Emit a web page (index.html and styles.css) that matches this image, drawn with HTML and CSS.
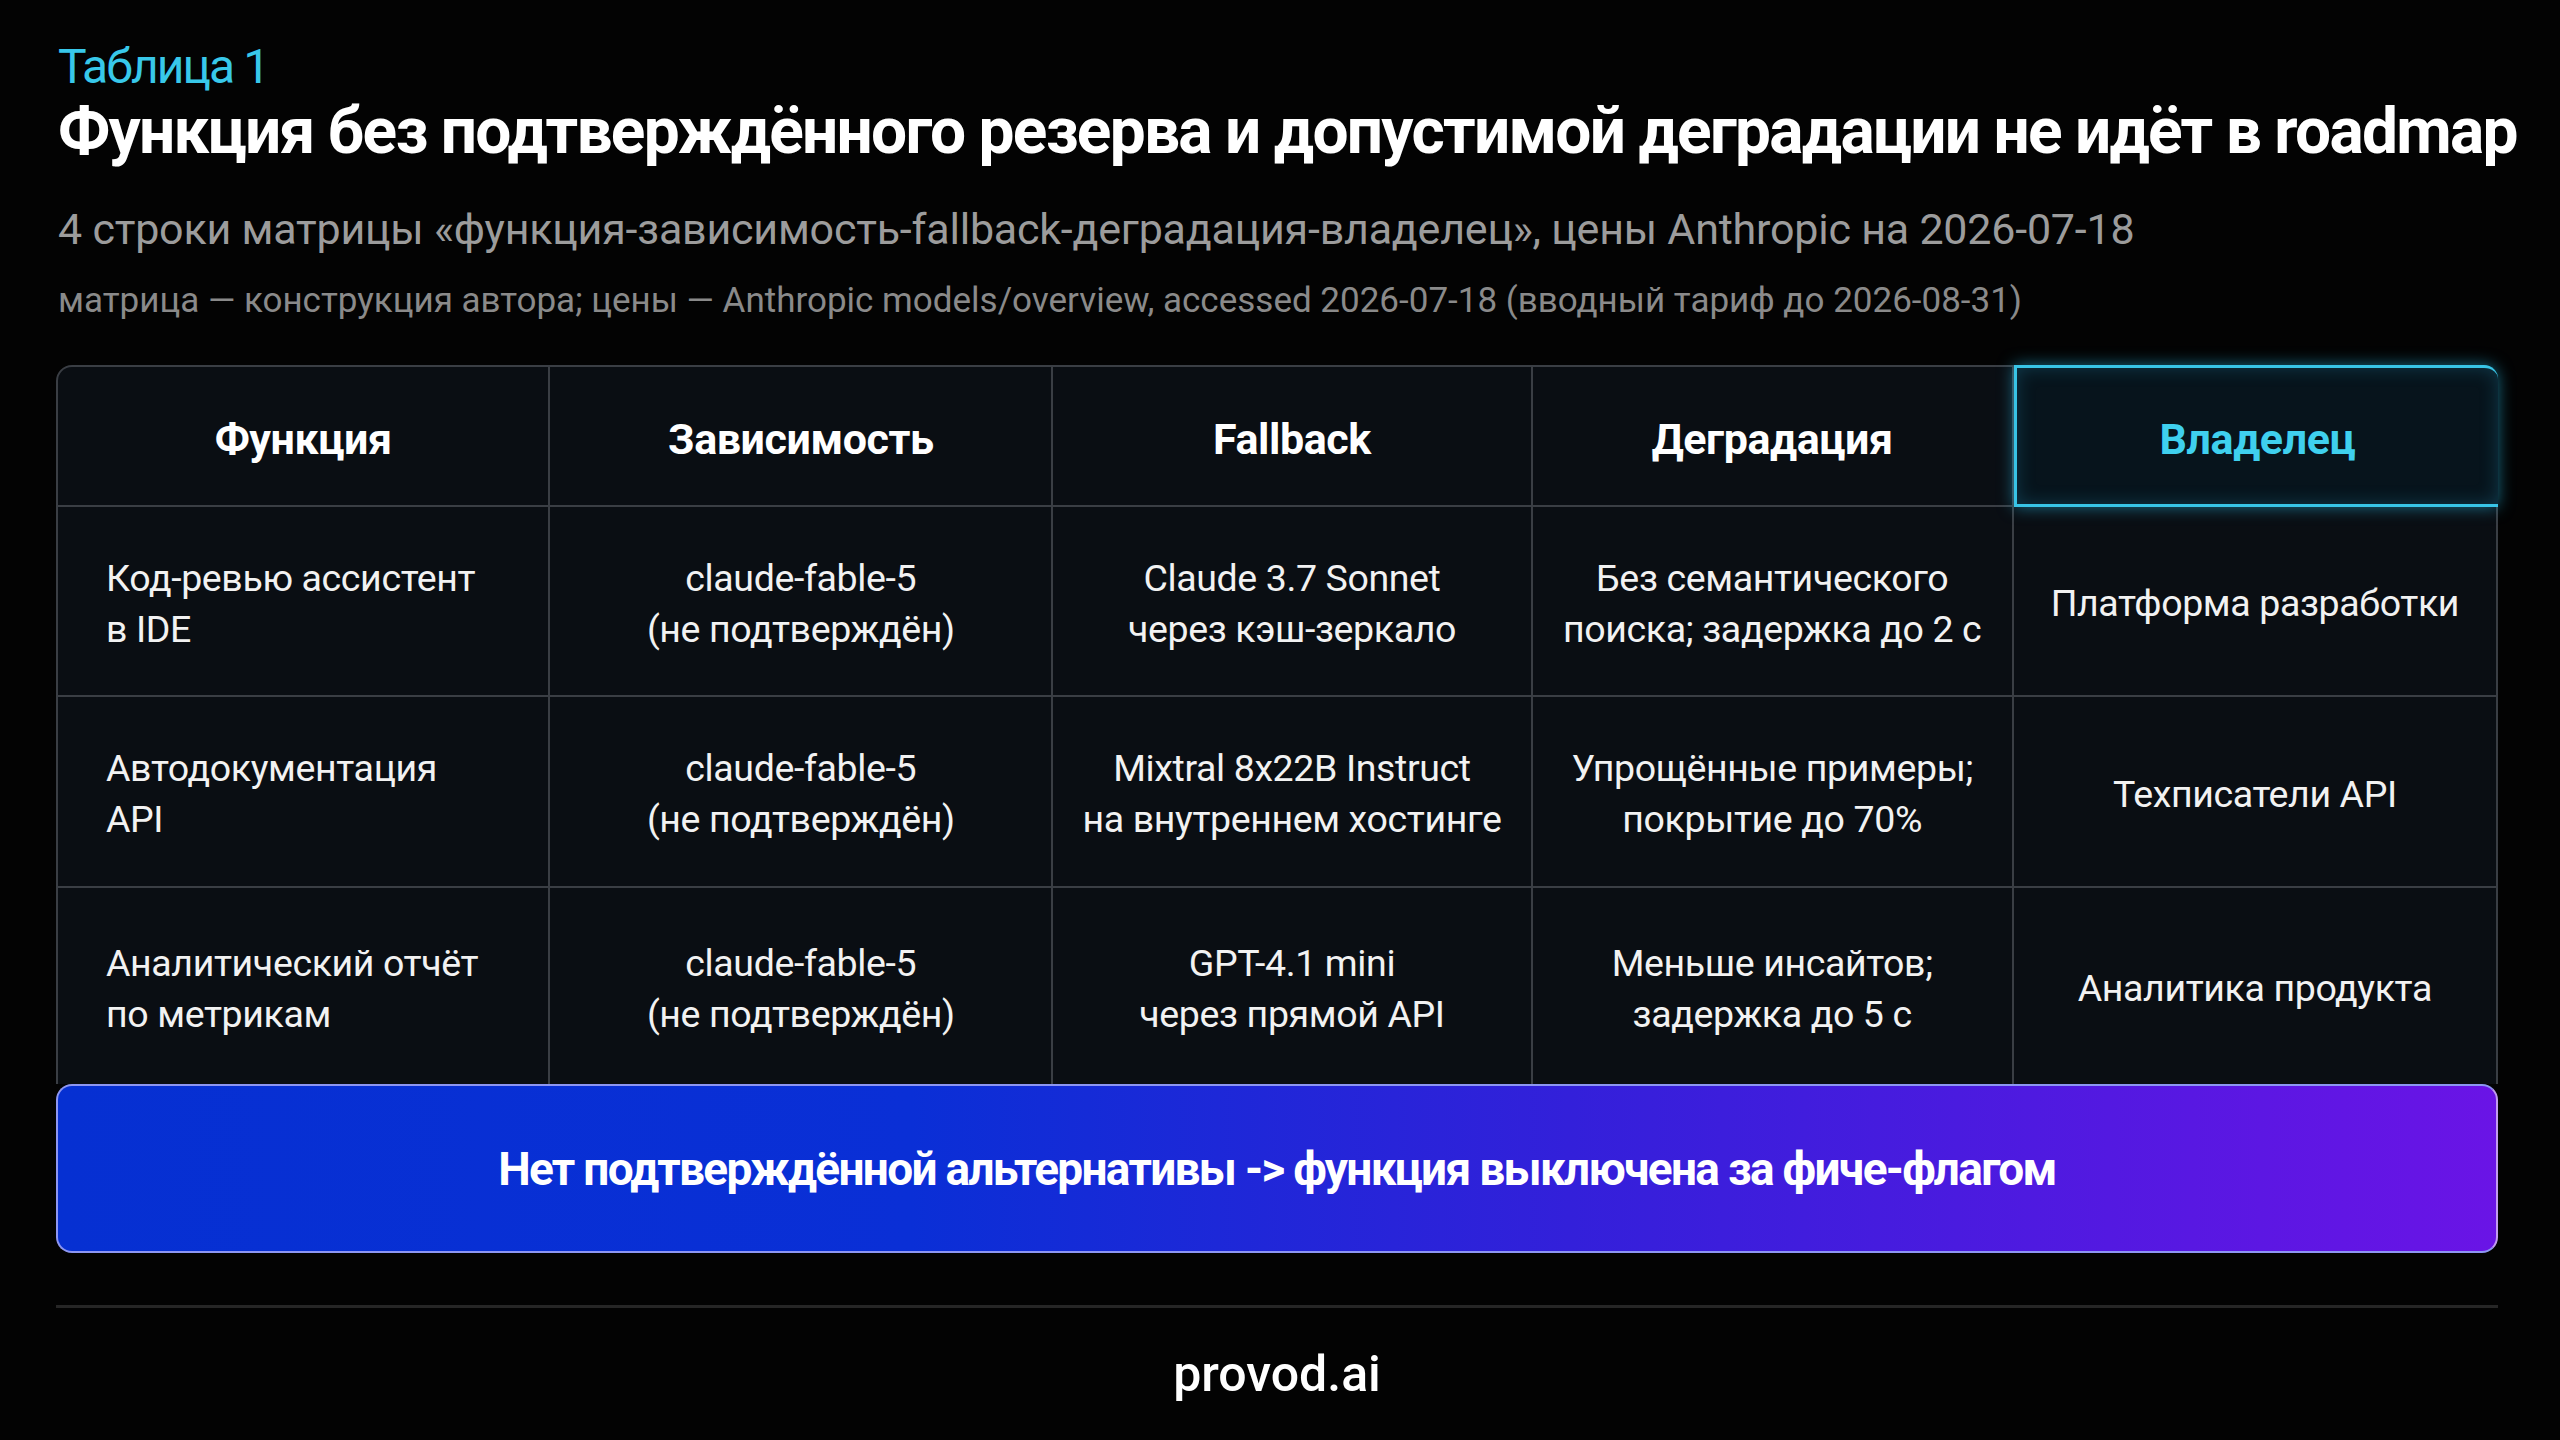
FILE: index.html
```html
<!DOCTYPE html>
<html lang="ru">
<head>
<meta charset="utf-8">
<title>Таблица 1</title>
<link rel="stylesheet" href="styles.css">
</head>
<body>
<main class="page">
  <div class="eyebrow">Таблица 1</div>
  <h1 class="title">Функция без подтверждённого резерва и допустимой деградации не идёт в roadmap</h1>
  <p class="subtitle">4 строки матрицы «функция-зависимость-fallback-деградация-владелец», цены Anthropic на 2026-07-18</p>
  <p class="source">матрица — конструкция автора; цены — Anthropic models/overview, accessed 2026-07-18 (вводный тариф до 2026-08-31)</p>

  <section class="matrix">
    <div class="grid">
      <div class="cell head">Функция</div>
      <div class="cell head">Зависимость</div>
      <div class="cell head">Fallback</div>
      <div class="cell head">Деградация</div>
      <div class="cell head owner">Владелец</div>

      <div class="cell first r1">Код-ревью ассистент<br>в IDE</div>
      <div class="cell r1">claude-fable-5<br>(не подтверждён)</div>
      <div class="cell r1">Claude 3.7 Sonnet<br>через кэш-зеркало</div>
      <div class="cell r1">Без семантического<br>поиска; задержка до 2 с</div>
      <div class="cell last r1">Платформа разработки</div>

      <div class="cell first r2">Автодокументация<br>API</div>
      <div class="cell r2">claude-fable-5<br>(не подтверждён)</div>
      <div class="cell r2">Mixtral 8x22B Instruct<br>на внутреннем хостинге</div>
      <div class="cell r2">Упрощённые примеры;<br>покрытие до 70%</div>
      <div class="cell last r2">Техписатели API</div>

      <div class="cell first r3">Аналитический отчёт<br>по метрикам</div>
      <div class="cell r3">claude-fable-5<br>(не подтверждён)</div>
      <div class="cell r3">GPT-4.1 mini<br>через прямой API</div>
      <div class="cell r3">Меньше инсайтов;<br>задержка до 5 с</div>
      <div class="cell last r3">Аналитика продукта</div>
    </div>
    <div class="verdict">Нет подтверждённой альтернативы -&gt; функция выключена за фиче-флагом</div>
  </section>

  <hr class="divider">
  <footer class="brand">provod.ai</footer>
</main>
</body>
</html>
```

FILE: styles.css
```css
* { box-sizing: border-box; }

html, body {
  margin: 0;
  padding: 0;
  background: #030303;
}

body {
  font-family: Roboto, "Noto Sans", "DejaVu Sans", sans-serif;
  color: #ffffff;
  width: 2560px;
  height: 1440px;
  overflow: hidden;
}

.page {
  padding: 39px 62px 0 56px;
}

.eyebrow {
  font-size: 48px;
  line-height: 56px;
  color: #38c8ea;
  padding-left: 2px;
  letter-spacing: -0.04em;
}

.title {
  margin: 2px 0 0;
  font-size: 64px;
  line-height: 70px;
  font-weight: 700;
  letter-spacing: -0.027em;
  padding-left: 2px;
  white-space: nowrap;
}

.subtitle {
  margin: 34px 0 0;
  font-size: 43px;
  line-height: 56px;
  color: #9c9c9c;
  padding-left: 2px;
  letter-spacing: -0.005em;
  white-space: nowrap;
}

.source {
  margin: 21px 0 0;
  font-size: 35px;
  line-height: 46px;
  color: #8a8a8a;
  padding-left: 2px;
  letter-spacing: 0;
  white-space: nowrap;
}

.matrix {
  margin-top: 41px;
}

.grid {
  display: grid;
  grid-template-columns: 493fr 504fr 480fr 482fr 483fr;
  grid-template-rows: 140px 190px 191px 196px;
  background: #0a0e13;
  border: 2px solid #3a3e44;
  border-bottom: none;
  border-radius: 16px 16px 0 0;
}

.cell {
  display: flex;
  align-items: center;
  justify-content: center;
  text-align: center;
  font-size: 37.5px;
  line-height: 51px;
  color: #f2f2f2;
  border-right: 2px solid #3a3e44;
  border-bottom: 2px solid #3a3e44;
  letter-spacing: -0.01em;
  padding-top: 5px;
}

.cell.last,
.cell.owner {
  border-right: none;
}

.cell.r3 {
  border-bottom: none;
}

.cell.first {
  justify-content: flex-start;
  text-align: left;
  padding-left: 48px;
}

.head {
  font-size: 43px;
  font-weight: 700;
  color: #ffffff;
  letter-spacing: -0.01em;
  padding-top: 6px;
}

.head:first-child {
  border-top-left-radius: 14px;
}

.owner {
  color: #3fd0ee;
  background: #07141c;
  border: 3px solid #38c4e6;
  border-top-right-radius: 14px;
  margin: -2px -2px 0 0;
  box-shadow: 0 0 16px rgba(40, 190, 235, 0.55), inset 0 0 18px rgba(40, 170, 220, 0.25);
  position: relative;
  z-index: 1;
}

.verdict {
  height: 169px;
  display: flex;
  align-items: center;
  justify-content: center;
  font-size: 46px;
  font-weight: 700;
  letter-spacing: -0.037em;
  color: #ffffff;
  border-radius: 16px;
  border: 2px solid #8d96f2;
  border-right-color: #c39af0;
  background: linear-gradient(90deg, #0630d2 0%, #0a2fd6 35%, #3320da 62%, #6a14e6 100%);
  position: relative;
}

.divider {
  margin: 52px 0 0;
  border: none;
  height: 3px;
  background: #262626;
}

.brand {
  margin-top: 36px;
  text-align: center;
  font-size: 50px;
  line-height: 60px;
  font-weight: 500;
  color: #ffffff;
}
```
